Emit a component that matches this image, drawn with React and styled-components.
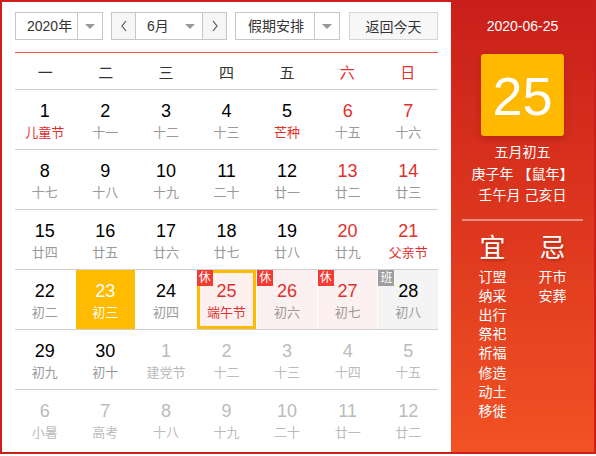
import React from "react";
import styled, { createGlobalStyle, css } from "styled-components";

const Global = createGlobalStyle`
  html, body { margin: 0; padding: 0; background: #fff; }
  body { font-family: "Liberation Sans", "Noto Sans CJK SC", sans-serif; }
  * { box-sizing: border-box; }
`;

const Frame = styled.div`
  width: 596px;
  height: 454px;
  border: 2px solid #c9201c;
  display: flex;
  background: #fff;
`;

const Main = styled.div`
  width: 449px;
  padding: 10px 13px 0 13px;
  display: flex;
  flex-direction: column;
`;

const Toolbar = styled.div`
  display: flex;
  align-items: center;
  height: 28px;
`;

const Select = styled.div`
  height: 28px;
  width: ${(p) => p.$w}px;
  margin-right: ${(p) => p.$mr || 0}px;
  border: 1px solid #c6c6c6;
  display: flex;
  align-items: center;
  background: #fff;
  font-size: 14px;
  color: #333;
`;

const SelectText = styled.div`
  flex: 1;
  padding-left: ${(p) => p.$pl}px;
  line-height: 26px;
`;

const ArrowBox = styled.div`
  width: 25px;
  height: 26px;
  display: flex;
  align-items: center;
  justify-content: center;
  border-left: ${(p) => (p.$divider ? "1px solid #c6c6c6" : "none")};
  &::after {
    content: "";
    border-left: 5px solid transparent;
    border-right: 5px solid transparent;
    border-top: 5px solid #999;
  }
`;

const Group = styled.div`
  height: 28px;
  width: 116px;
  margin-right: 8px;
  border: 1px solid #c6c6c6;
  display: flex;
  font-size: 14px;
  color: #333;
`;

const StepButton = styled.div`
  width: 24px;
  height: 26px;
  background: #f6f6f6;
  display: flex;
  align-items: center;
  justify-content: center;
  ${(p) =>
    p.$side === "left"
      ? css`border-right: 1px solid #c6c6c6;`
      : css`border-left: 1px solid #c6c6c6;`}
`;

const MonthSelect = styled.div`
  flex: 1;
  display: flex;
  align-items: center;
  background: #fff;
  padding-left: 11px;
`;

const TodayButton = styled.div`
  margin-left: auto;
  width: 89px;
  height: 28px;
  border: 1px solid #d6d6d6;
  background: #f7f7f7;
  font-size: 14px;
  color: #333;
  display: flex;
  align-items: center;
  justify-content: center;
`;

const RedLine = styled.div`
  height: 1px;
  background: #f2524a;
  margin-top: 12px;
`;

const WeekRow = styled.div`
  display: grid;
  grid-template-columns: repeat(7, 1fr);
  height: 37px;
  border-bottom: 1px solid #cfcfcf;
`;

const WeekDay = styled.div`
  display: flex;
  align-items: center;
  justify-content: center;
  font-size: 15px;
  color: ${(p) => (p.$weekend ? "#e0302d" : "#333")};
  padding-top: 1px;
`;

const WeekGrid = styled.div`
  display: grid;
  grid-template-columns: repeat(7, 1fr);
  column-gap: 1px;
  height: 60px;
  border-bottom: ${(p) => (p.$last ? "none" : "1px solid #cfcfcf")};
`;

const toneStyles = {
  selected: css`background: #ffbb00;`,
  today: css`background: #fff0f0; border: 3px solid #ffbb00; padding-top: 6px;`,
  rest: css`background: #fdf0f0;`,
  work: css`background: #f4f4f4;`,
};

const Cell = styled.div`
  position: relative;
  height: 59px;
  padding-top: 9px;
  display: flex;
  flex-direction: column;
  align-items: center;
  ${(p) => p.$tone && toneStyles[p.$tone]}
`;

const DayNum = styled.div`
  font-size: 18px;
  line-height: 24px;
  color: ${(p) => p.$color};
`;

const Lunar = styled.div`
  font-size: 13px;
  line-height: 20px;
  color: ${(p) => p.$color};
`;

const Badge = styled.span`
  position: absolute;
  top: ${(p) => (p.$inset ? -3 : 0)}px;
  left: ${(p) => (p.$inset ? -3 : 0)}px;
  width: 16px;
  height: 16px;
  background: ${(p) => (p.$work ? "#9e9e9e" : "#f23c32")};
  color: #fff;
  font-size: 12px;
  line-height: 16px;
  text-align: center;
`;

const Side = styled.div`
  flex: 1;
  background: linear-gradient(180deg, #c91f1a 0%, #df3a1f 55%, #f25224 100%);
  color: #fff;
  display: flex;
  flex-direction: column;
  align-items: center;
  padding-top: 14px;
`;

const DateLine = styled.div`
  font-size: 14px;
  line-height: 20px;
`;

const BigDay = styled.div`
  margin-top: 18px;
  width: 83px;
  height: 82px;
  background: #ffb900;
  border-radius: 3px;
  box-shadow: 0 3px 6px rgba(120, 20, 0, 0.3);
  font-family: "Liberation Sans", sans-serif;
  font-size: 54px;
  display: flex;
  align-items: center;
  justify-content: center;
  padding-top: 2px;
`;

const InfoLine = styled.div`
  font-size: 14px;
  line-height: 21.5px;
  margin-top: ${(p) => p.$mt || 0}px;
`;

const Divider = styled.div`
  width: 121px;
  height: 2px;
  background: rgba(255, 255, 255, 0.45);
  margin-top: 12px;
`;

const Omens = styled.div`
  display: flex;
  gap: 32px;
  margin-top: 12px;
`;

const OmenCol = styled.div`
  display: flex;
  flex-direction: column;
  align-items: center;
  width: 28px;
`;

const OmenTitle = styled.div`
  font-size: 26px;
  line-height: 30px;
  margin-bottom: 5px;
  text-shadow: 1px 2px 2px rgba(120, 20, 0, 0.35);
`;

const OmenItem = styled.div`
  font-size: 14px;
  line-height: 19.2px;
`;

const Chevron = ({ dir }) => (
  <svg width="8" height="12" viewBox="0 0 8 12">
    <path
      d={dir === "left" ? "M6 1 L2 6 L6 11" : "M2 1 L6 6 L2 11"}
      fill="none"
      stroke="#555"
      strokeWidth="1.2"
    />
  </svg>
);

const RED = "#e0302d";
const GRAY = "#999";
const PALE = "#bbb";

const rows = [
  [
    { d: 1, l: "儿童节", fest: true },
    { d: 2, l: "十一" },
    { d: 3, l: "十二" },
    { d: 4, l: "十三" },
    { d: 5, l: "芒种", fest: true },
    { d: 6, l: "十五", we: true },
    { d: 7, l: "十六", we: true },
  ],
  [
    { d: 8, l: "十七" },
    { d: 9, l: "十八" },
    { d: 10, l: "十九" },
    { d: 11, l: "二十" },
    { d: 12, l: "廿一" },
    { d: 13, l: "廿二", we: true },
    { d: 14, l: "廿三", we: true },
  ],
  [
    { d: 15, l: "廿四" },
    { d: 16, l: "廿五" },
    { d: 17, l: "廿六" },
    { d: 18, l: "廿七" },
    { d: 19, l: "廿八" },
    { d: 20, l: "廿九", we: true },
    { d: 21, l: "父亲节", we: true, fest: true },
  ],
  [
    { d: 22, l: "初二" },
    { d: 23, l: "初三", tone: "selected" },
    { d: 24, l: "初四" },
    { d: 25, l: "端午节", we: true, fest: true, tone: "today", badge: "休" },
    { d: 26, l: "初六", we: true, tone: "rest", badge: "休" },
    { d: 27, l: "初七", we: true, tone: "rest", badge: "休" },
    { d: 28, l: "初八", tone: "work", badge: "班" },
  ],
  [
    { d: 29, l: "初九" },
    { d: 30, l: "初十" },
    { d: 1, l: "建党节", other: true },
    { d: 2, l: "十二", other: true },
    { d: 3, l: "十三", other: true },
    { d: 4, l: "十四", other: true },
    { d: 5, l: "十五", other: true },
  ],
  [
    { d: 6, l: "小暑", other: true },
    { d: 7, l: "高考", other: true },
    { d: 8, l: "十八", other: true },
    { d: 9, l: "十九", other: true },
    { d: 10, l: "二十", other: true },
    { d: 11, l: "廿一", other: true },
    { d: 12, l: "廿二", other: true },
  ],
];

const weekdays = ["一", "二", "三", "四", "五", "六", "日"];
const yi = ["订盟", "纳采", "出行", "祭祀", "祈福", "修造", "动土", "移徙"];
const ji = ["开市", "安葬"];

function DayCell({ c }) {
  let numColor = "#000";
  let lunarColor = GRAY;
  if (c.other) {
    numColor = PALE;
    lunarColor = PALE;
  } else if (c.tone === "selected") {
    numColor = "#fff";
    lunarColor = "#fff";
  } else {
    if (c.we) numColor = RED;
    if (c.fest) lunarColor = RED;
  }
  return (
    <Cell $tone={c.tone}>
      {c.badge && (
        <Badge $work={c.badge === "班"} $inset={c.tone === "today"}>
          {c.badge}
        </Badge>
      )}
      <DayNum $color={numColor}>{c.d}</DayNum>
      <Lunar $color={lunarColor}>{c.l}</Lunar>
    </Cell>
  );
}

export default function App() {
  return (
    <>
      <Global />
      <Frame>
        <Main>
          <Toolbar>
            <Select $w={88} $mr={8}>
              <SelectText $pl={11}>2020年</SelectText>
              <ArrowBox $divider />
            </Select>
            <Group>
              <StepButton $side="left">
                <Chevron dir="left" />
              </StepButton>
              <MonthSelect>
                <SelectText $pl={0}>6月</SelectText>
                <ArrowBox />
              </MonthSelect>
              <StepButton $side="right">
                <Chevron dir="right" />
              </StepButton>
            </Group>
            <Select $w={105}>
              <SelectText $pl={12}>假期安排</SelectText>
              <ArrowBox $divider />
            </Select>
            <TodayButton>返回今天</TodayButton>
          </Toolbar>
          <RedLine />
          <WeekRow>
            {weekdays.map((w, i) => (
              <WeekDay key={w} $weekend={i >= 5}>
                {w}
              </WeekDay>
            ))}
          </WeekRow>
          {rows.map((r, i) => (
            <WeekGrid key={i} $last={i === rows.length - 1}>
              {r.map((c, j) => (
                <DayCell key={j} c={c} />
              ))}
            </WeekGrid>
          ))}
        </Main>
        <Side>
          <DateLine>2020-06-25</DateLine>
          <BigDay>25</BigDay>
          <InfoLine $mt={6}>五月初五</InfoLine>
          <InfoLine>庚子年 【鼠年】</InfoLine>
          <InfoLine>壬午月 己亥日</InfoLine>
          <Divider />
          <Omens>
            <OmenCol>
              <OmenTitle>宜</OmenTitle>
              {yi.map((t) => (
                <OmenItem key={t}>{t}</OmenItem>
              ))}
            </OmenCol>
            <OmenCol>
              <OmenTitle>忌</OmenTitle>
              {ji.map((t) => (
                <OmenItem key={t}>{t}</OmenItem>
              ))}
            </OmenCol>
          </Omens>
        </Side>
      </Frame>
    </>
  );
}
